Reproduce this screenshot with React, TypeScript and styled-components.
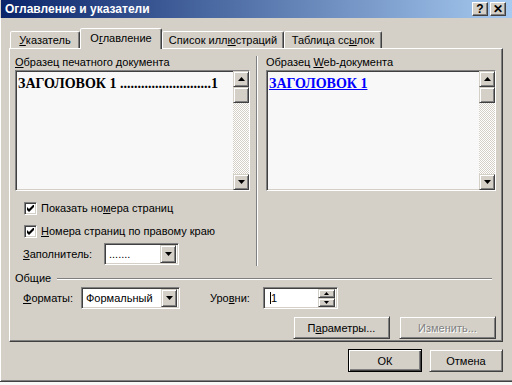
import React from "react";
import styled, { createGlobalStyle, css } from "styled-components";

const face = "#d4d0c8";
const shadow = "#808080";
const dark = "#404040";

const GlobalStyle = createGlobalStyle`
  html, body {
    margin: 0;
    padding: 0;
    background: #f8f8f8;
  }
  body {
    width: 512px;
    height: 385px;
    overflow: hidden;
    font-family: "Liberation Sans", Arial, sans-serif;
    font-size: 11px;
    color: #000;
  }
`;

const Window = styled.div`
  width: 512px;
  height: 382px;
  box-sizing: border-box;
  background: ${face};
  border-bottom: 1px solid ${dark};
  display: flex;
  flex-direction: column;
`;

const TitleBar = styled.div`
  height: 18px;
  margin-left: 1px;
  flex-shrink: 0;
  display: flex;
  align-items: center;
  padding: 0 6px 0 4px;
  background: linear-gradient(to right, #0a246a, #a6caf0);
  color: #fff;
  font-weight: bold;
  font-size: 12px;
`;

const Title = styled.span`
  flex: 1;
`;

const CaptionButton = styled.div`
  width: 16px;
  height: 14px;
  box-sizing: border-box;
  margin-left: 2px;
  display: flex;
  align-items: center;
  justify-content: center;
  background: ${face};
  border: 1px solid;
  border-color: #fff ${dark} ${dark} #fff;
  box-shadow: inset -1px -1px ${shadow};
  color: #000;
  font-size: 12px;
  font-weight: bold;
  line-height: 1;
`;

const Body = styled.div`
  flex: 1;
  display: flex;
  flex-direction: column;
  padding: 10px 9px 0 9px;
  box-shadow: inset 1px 0 #fff, inset 0 -1px ${shadow};
`;

const TabStrip = styled.div`
  display: flex;
  align-items: flex-end;
  height: 20px;
  padding-left: 1px;
  position: relative;
  z-index: 1;
`;

const Tab = styled.div<{ $w: number; $active?: boolean }>`
  width: ${(p) => p.$w}px;
  height: 17px;
  box-sizing: border-box;
  display: flex;
  align-items: center;
  justify-content: center;
  border: 1px solid;
  border-bottom: none;
  border-color: #fff ${dark} transparent #fff;
  border-radius: 2px 2px 0 0;
  box-shadow: inset -1px 0 ${shadow};
  background: ${face};
  ${(p) =>
    p.$active &&
    css`
      height: 21px;
      margin-bottom: -1px;
      padding-bottom: 2px;
    `}
`;

const U = styled.span`
  text-decoration: underline;
`;

const Panel = styled.div`
  width: 494px;
  height: 294px;
  box-sizing: border-box;
  border: 1px solid;
  border-color: #fff ${dark} ${dark} #fff;
  box-shadow: inset -1px -1px ${shadow};
  padding: 0 6px 0 5px;
  display: flex;
  flex-direction: column;
`;

const Samples = styled.div`
  display: grid;
  grid-template-columns: 235px 16px 230px;
`;

const Column = styled.div`
  display: flex;
  flex-direction: column;
`;

const Divider = styled.div`
  margin: 7px 0 0 6px;
  width: 1px;
  height: 210px;
  background: ${shadow};
  box-shadow: 1px 0 #fff;
`;

const Label = styled.div`
  margin-top: 6px;
  height: 14px;
  line-height: 14px;
  white-space: nowrap;
`;

const Sunken = styled.div`
  box-sizing: border-box;
  border: 1px solid;
  border-color: ${shadow} #fff #fff ${shadow};
  box-shadow: inset 1px 1px ${dark}, inset -1px -1px ${face};
  background: #fff;
`;

const Preview = styled(Sunken)`
  margin-top: 1px;
  height: 121px;
  padding: 2px;
  display: flex;
  background: #f8f8f8;
`;

const PreviewText = styled.div`
  flex: 1;
  padding: 3px 0 0 0;
  font-family: "Liberation Serif", "Times New Roman", serif;
  font-weight: bold;
  font-size: 14px;
  white-space: nowrap;
`;

const WebLink = styled.span`
  color: #0000ff;
  text-decoration: underline;
`;

const ScrollBar = styled.div`
  width: 16px;
  display: flex;
  flex-direction: column;
  margin: -2px -2px -2px 0;
  background: repeating-conic-gradient(#fff 0 25%, ${face} 0 50%) 0 0 / 2px 2px;
`;

const Raised = styled.div`
  box-sizing: border-box;
  background: ${face};
  border: 1px solid;
  border-color: ${face} ${dark} ${dark} ${face};
  box-shadow: inset 1px 1px #fff, inset -1px -1px ${shadow};
`;

const ArrowButton = styled(Raised)`
  width: 16px;
  height: 16px;
  display: flex;
  align-items: center;
  justify-content: center;
`;

const Track = styled.div`
  flex: 1;
`;

const CheckRow = styled.div<{ $top: number }>`
  display: flex;
  align-items: center;
  height: 16px;
  margin: ${(p) => p.$top}px 0 0 9px;
  gap: 4px;
`;

const CheckBox = styled(Sunken)`
  width: 13px;
  height: 13px;
  display: flex;
  align-items: center;
  justify-content: center;
`;

const FieldRow = styled.div<{ $top: number }>`
  display: flex;
  align-items: center;
  margin-top: ${(p) => p.$top}px;
  padding-left: 8px;
`;

const FieldLabel = styled.span<{ $w: number; $gap?: number }>`
  width: ${(p) => p.$w}px;
  margin-left: ${(p) => p.$gap ?? 0}px;
  white-space: nowrap;
`;

const Combo = styled(Sunken)<{ $w: number }>`
  width: ${(p) => p.$w}px;
  height: 22px;
  padding: 2px;
  display: flex;
  align-items: center;
`;

const ComboText = styled.span`
  flex: 1;
  padding-left: 2px;
`;

const DropButton = styled(ArrowButton)`
  height: 18px;
`;

const SpinButtons = styled.div`
  display: flex;
  flex-direction: column;
`;

const SpinButton = styled(Raised)`
  width: 17px;
  height: 9px;
  display: flex;
  align-items: center;
  justify-content: center;
`;

const Caret = styled.span`
  border-left: 1px solid #000;
  margin-left: 2px;
  line-height: 13px;
`;

const GroupHeader = styled.div`
  display: flex;
  align-items: center;
  margin-top: 5px;
  height: 14px;
  gap: 6px;
`;

const GroupLine = styled.div`
  flex: 1;
  height: 1px;
  margin-right: 4px;
  background: ${shadow};
  box-shadow: 0 1px #fff;
`;

const ButtonRow = styled.div<{ $top: number; $gap: number }>`
  display: flex;
  justify-content: flex-end;
  gap: ${(p) => p.$gap}px;
  margin-top: ${(p) => p.$top}px;
`;

const PushButton = styled(Raised)<{ $w: number; $default?: boolean; $disabled?: boolean }>`
  width: ${(p) => p.$w}px;
  height: 23px;
  display: flex;
  align-items: center;
  justify-content: center;
  ${(p) =>
    p.$disabled &&
    css`
      color: ${shadow};
      text-shadow: 1px 1px #fff;
    `}
  ${(p) =>
    p.$default &&
    css`
      border-color: #000;
      box-shadow: inset 1px 1px #fff, inset -1px -1px ${dark}, inset -2px -2px ${shadow};
    `}
`;

const Arrow = ({ up }: { up?: boolean }) => (
  <svg width="7" height="4" viewBox="0 0 7 4">
    <path d={up ? "M3.5 0 L7 4 L0 4 Z" : "M0 0 L7 0 L3.5 4 Z"} fill="#000" />
  </svg>
);

const SmallArrow = ({ up }: { up?: boolean }) => (
  <svg width="5" height="3" viewBox="0 0 5 3">
    <path d={up ? "M2.5 0 L5 3 L0 3 Z" : "M0 0 L5 0 L2.5 3 Z"} fill="#000" />
  </svg>
);

const Check = () => (
  <svg width="7" height="7" viewBox="0 0 7 7">
    <path d="M0 2 L2 4 L7 -1 L7 2 L2 7 L0 5 Z" fill="#000" />
  </svg>
);

const VScroll = () => (
  <ScrollBar>
    <ArrowButton>
      <Arrow up />
    </ArrowButton>
    <ArrowButton />
    <Track />
    <ArrowButton>
      <Arrow />
    </ArrowButton>
  </ScrollBar>
);

export default function App() {
  return (
    <>
      <GlobalStyle />
      <Window>
        <TitleBar>
          <Title>Оглавление и указатели</Title>
          <CaptionButton>?</CaptionButton>
          <CaptionButton>✕</CaptionButton>
        </TitleBar>
        <Body>
          <TabStrip>
            <Tab $w={70}>
              <span>
                <U>У</U>казатель
              </span>
            </Tab>
            <Tab $w={82} $active>
              <span>
                О<U>г</U>лавление
              </span>
            </Tab>
            <Tab $w={122}>
              <span>
                Список илл<U>ю</U>страций
              </span>
            </Tab>
            <Tab $w={98}>
              <span>
                Таблица сс<U>ы</U>лок
              </span>
            </Tab>
          </TabStrip>
          <Panel>
            <Samples>
              <Column>
                <Label>
                  <U>О</U>бразец печатного документа
                </Label>
                <Preview>
                  <PreviewText>ЗАГОЛОВОК 1 {".".repeat(26)}1</PreviewText>
                  <VScroll />
                </Preview>
                <CheckRow $top={9}>
                  <CheckBox>
                    <Check />
                  </CheckBox>
                  <span>
                    Показать но<U>м</U>ера страниц
                  </span>
                </CheckRow>
                <CheckRow $top={7}>
                  <CheckBox>
                    <Check />
                  </CheckBox>
                  <span>
                    <U>Н</U>омера страниц по правому краю
                  </span>
                </CheckRow>
                <FieldRow $top={4}>
                  <FieldLabel $w={81}>
                    <U>З</U>аполнитель:
                  </FieldLabel>
                  <Combo $w={75}>
                    <ComboText>.......</ComboText>
                    <DropButton>
                      <Arrow />
                    </DropButton>
                  </Combo>
                </FieldRow>
              </Column>
              <Divider />
              <Column>
                <Label>
                  Образец <U>W</U>eb-документа
                </Label>
                <Preview>
                  <PreviewText>
                    <WebLink>ЗАГОЛОВОК 1</WebLink>
                  </PreviewText>
                  <VScroll />
                </Preview>
              </Column>
            </Samples>
            <GroupHeader>
              <span>Общие</span>
              <GroupLine />
            </GroupHeader>
            <FieldRow $top={2}>
              <FieldLabel $w={58}>
                <U>Ф</U>орматы:
              </FieldLabel>
              <Combo $w={99}>
                <ComboText>Формальный</ComboText>
                <DropButton>
                  <Arrow />
                </DropButton>
              </Combo>
              <FieldLabel $w={53} $gap={30}>
                Уро<U>в</U>ни:
              </FieldLabel>
              <Combo $w={75}>
                <ComboText>
                  <Caret>1</Caret>
                </ComboText>
                <SpinButtons>
                  <SpinButton>
                    <SmallArrow up />
                  </SpinButton>
                  <SpinButton>
                    <SmallArrow />
                  </SpinButton>
                </SpinButtons>
              </Combo>
            </FieldRow>
            <ButtonRow $top={7} $gap={9}>
              <PushButton $w={97}>
                <span>
                  П<U>а</U>раметры...
                </span>
              </PushButton>
              <PushButton $w={97} $disabled>
                Изменить...
              </PushButton>
            </ButtonRow>
          </Panel>
          <ButtonRow $top={7} $gap={7}>
            <PushButton $w={74} $default>
              ОК
            </PushButton>
            <PushButton $w={74}>Отмена</PushButton>
          </ButtonRow>
        </Body>
      </Window>
    </>
  );
}
